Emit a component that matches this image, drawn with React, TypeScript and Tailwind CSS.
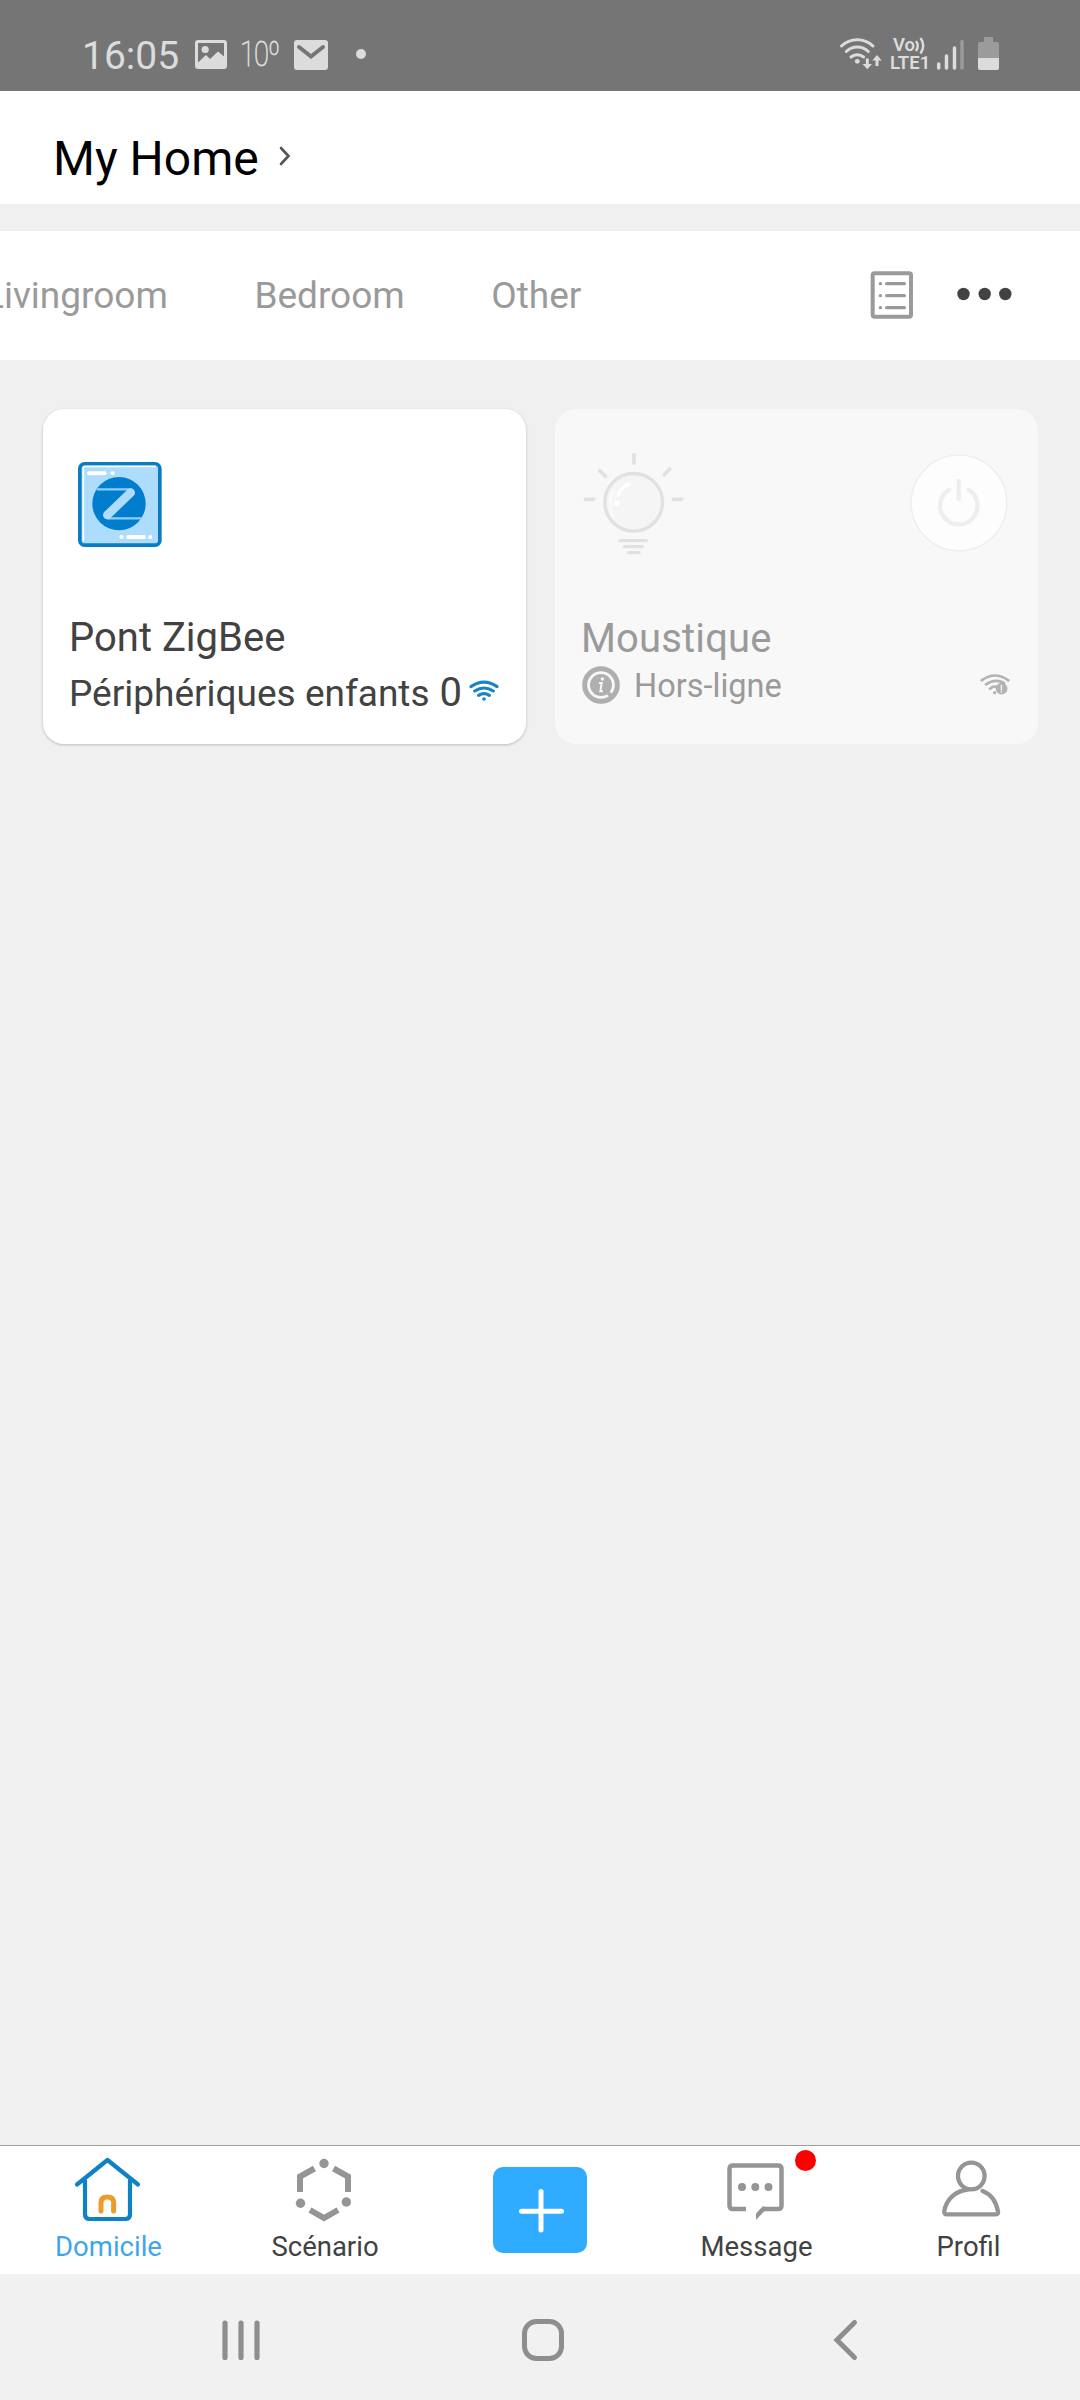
import React from "react"

const ROOMS = ["Livingroom", "Bedroom", "Other"]

function StatusBar() {
  return (
    <div className="h-[91px] bg-[#757575] text-[#dcdcdc] flex items-start pl-[82px] pr-[81px] shrink-0">
      <div className="text-[39px] leading-[48px] mt-8 w-[113px]">16:05</div>

      {/* picture */}
      <svg className="mt-10" width="32" height="29" viewBox="0 0 32 29">
        <path
          fillRule="evenodd"
          fill="currentColor"
          d="M3 0h26a3 3 0 0 1 3 3v23a3 3 0 0 1-3 3H3a3 3 0 0 1-3-3V3a3 3 0 0 1 3-3zM3 3v19.500l8-7.500 4 4 8-7.500 6 5V3z"
        />
        <circle cx="10.200" cy="9.500" r="3.600" fill="currentColor" />
      </svg>

      <div className="text-[35px] leading-[42px] mt-[34px] ml-[13px] w-[54px] font-thin tracking-[-1.200px] origin-left scale-x-[0.780] [-webkit-text-stroke:0.800px_#dcdcdc]">
        10º
      </div>

      {/* mail */}
      <svg className="mt-10" width="34" height="30" viewBox="0 0 34 30">
        <rect width="34" height="30" rx="3" fill="currentColor" />
        <path d="M5 7l12 9.500L29 7" fill="none" stroke="#757575" strokeWidth="4" strokeLinecap="round" />
      </svg>
      <div className="w-[10px] h-[10px] rounded-full bg-[#dcdcdc] mt-[49px] ml-[28px]" />

      <div className="flex-1" />

      {/* wifi with traffic arrows */}
      <svg className="mt-9" width="44" height="35" viewBox="838 36 44 35" fill="none" stroke="currentColor">
        <g strokeWidth="3" strokeLinecap="round">
          <path d="M841.500 46a23 23 0 0 1 31.500 0" />
          <path d="M846.300 51.500a16 16 0 0 1 22 0" />
          <path d="M851 57a9.600 9.600 0 0 1 12.600 0" />
        </g>
        <circle cx="857.300" cy="61.300" r="2.400" fill="currentColor" stroke="none" />
        <path strokeWidth="3" d="M867.300 58.500v8M877 66v-8" />
        <path d="M862.600 64h9.400l-4.700 5.200zM872.300 60.500h9.400l-4.700-5.500z" fill="currentColor" stroke="none" />
      </svg>

      <div className="w-[40px] ml-2 mt-9 font-semibold">
        <div className="flex h-[17px] pl-[3px]">
          <span className="text-[18.500px] leading-[18px]">Vo</span>
          <svg className="ml-[-1px] mt-px shrink-0" width="12" height="18" viewBox="0 0 12 18" fill="none" stroke="currentColor" strokeWidth="2.400">
            <path d="M2 4q3.500 4.500 0 10M6.500 1q5.500 7.500 0 15.500" />
          </svg>
        </div>
        <div className="text-[18.500px] leading-[20px]">LTE1</div>
      </div>

      {/* signal */}
      <svg className="mt-9 ml-[6px]" width="28" height="35" viewBox="936 36 28 35" stroke="currentColor" strokeWidth="3.500" strokeLinecap="round">
        <path d="M938.700 64v4M946.500 56v12M954.500 48v20" />
        <path d="M962 41.500V68" stroke="#9b9b9b" />
      </svg>

      {/* battery */}
      <svg className="mt-9 ml-[14px]" width="21" height="35" viewBox="0 0 21 35">
        <path d="M6 1h9v5h4a2 2 0 0 1 2 2v14H0V8a2 2 0 0 1 2-2h4z" fill="#9b9b9b" />
        <path d="M0 22h21v10a2 2 0 0 1-2 2H2a2 2 0 0 1-2-2z" fill="currentColor" />
      </svg>
    </div>
  )
}

function HomeHeader() {
  return (
    <div className="h-[113px] bg-white flex items-center pl-[53px] pt-[22px] shrink-0">
      <h1 className="text-[48px] leading-[56px] text-black">My Home</h1>
      <svg className="ml-[19px] mb-[5px]" width="14" height="20" viewBox="0 0 14 20" fill="none" stroke="#555" strokeWidth="2.600">
        <path d="M3 2l7.500 8L3 18" strokeLinecap="round" />
      </svg>
    </div>
  )
}

function RoomTabs() {
  return (
    <div className="h-[129px] mt-[27px] bg-white flex items-center overflow-hidden shrink-0">
      <div className="flex gap-[86.500px] ml-[-16px] text-[37px] leading-[44px] text-[#9a9a9a]">
        {ROOMS.map((room) => (
          <span key={room}>{room}</span>
        ))}
      </div>
      <div className="flex-1" />
      <svg className="mb-[2px]" width="44" height="50" viewBox="150 150 132 150" fill="none" stroke="#9a9a9a" strokeWidth="12">
        <rect x="158" y="160" width="115" height="130" rx="6" />
        <path strokeWidth="10" strokeLinecap="round" d="M200 191h53M200 227h53M200 263h53" />
        <path strokeWidth="10" strokeLinecap="round" d="M181 191h.5M181 227h.5M181 263h.5" />
      </svg>
      <svg className="ml-[43px] mr-[68px] mb-[3px]" width="55" height="14" viewBox="957 287 55 14" fill="#424242">
        <circle cx="963.500" cy="294" r="6.200" />
        <circle cx="984.700" cy="294" r="6.200" />
        <circle cx="1005.300" cy="294" r="6.200" />
      </svg>
    </div>
  )
}

function BridgeCard() {
  return (
    <div className="w-[483px] h-[335px] rounded-[21px] bg-white shadow-[0_1px_3px_rgba(0,0,0,0.22)] pt-[53px] pl-[26px] text-[#424242]">
      <svg className="ml-[9px]" width="84" height="85" viewBox="144 202 252 255">
        <rect x="149.500" y="207.500" width="240" height="244" rx="14" fill="#aedcfd" stroke="#0a7dc2" strokeWidth="11" />
        <path d="M160 438V219q0-4 5-4h213" fill="none" stroke="#fff" strokeWidth="5" />
        <circle cx="267" cy="327" r="80" fill="#007dcc" />
        <path d="M200 284h102M232 371h103" fill="none" stroke="#8fd0fb" strokeWidth="7" />
        <path d="M302 294L232 361" stroke="#aedcfd" strokeWidth="26" strokeLinecap="round" />
        <path d="M177 236h47M247 236h1M274 427h1M294 427h48M360 427h1" fill="none" stroke="#fff" strokeWidth="12" strokeLinecap="round" />
      </svg>
      <div className="text-[40px] leading-[48px] mt-[67px]">Pont ZigBee</div>
      <div className="flex items-baseline mt-[7px]">
        <span className="text-[37px] leading-[48px]">Périphériques enfants</span>
        <span className="text-[40px] leading-[48px] ml-[10px]">0</span>
        <svg className="ml-[7px] mb-[6px] self-center" width="30" height="21" viewBox="1317 853 90 63" fill="none" stroke="#1784c8" strokeWidth="9.500" strokeLinecap="round">
          <path d="M1323 873q39-27 78 0M1334 886q28-18 56 0M1346 899q16-10 32 0" />
          <circle cx="1362" cy="910" r="5.500" fill="#1784c8" stroke="none" />
        </svg>
      </div>
    </div>
  )
}

function OfflineCard() {
  return (
    <div className="w-[483px] h-[335px] rounded-[21px] bg-[#f8f8f8] pt-[43px] pl-[26px] pr-[28px] text-[#9a9a9a]">
      <div className="flex justify-between items-start">
        <svg className="ml-[1px]" width="104" height="104" viewBox="111 171 312 312" fill="none" stroke="#e1e1e1" strokeWidth="10" strokeLinecap="round">
          <circle cx="266" cy="322" r="86.500" fill="#f5f5f5" />
          <path d="M204 366q-17-41 1-78" stroke="#fafafa" strokeWidth="9" />
          <path d="M219 301q8-24 31-33" stroke="#fff" />
          <circle cx="215" cy="325" r="9" fill="#fff" stroke="none" />
          <path d="M267 179v26M164 227l18 17M374 222l-16 17M121 313h25M385 313h25" strokeWidth="11" />
          <path d="M225 437h79M238 455h54M250 473h32" />
        </svg>
        <svg className="mr-[2px] mt-[2px]" width="98" height="98" viewBox="1096 178 294 294" fill="none" stroke="#eeeeee" strokeLinecap="round">
          <circle cx="1243" cy="325" r="143.500" fill="#fdfdfd" strokeWidth="4" />
          <path d="M1242 259v54M1214 285a56 56 0 1 0 57 0" strokeWidth="13" />
        </svg>
      </div>

      <div className="text-[40px] leading-[48px] mt-[59px] tracking-[0.150px]">Moustique</div>

      <div className="flex items-center mt-px">
        <svg width="40" height="40" viewBox="108 810 120 120">
          <circle cx="168" cy="870" r="49" fill="none" stroke="#afafaf" strokeWidth="15" />
          <circle cx="168" cy="870" r="33" fill="#afafaf" />
          <path d="M190 894l8 8" stroke="#afafaf" strokeWidth="12" />
          <circle cx="172" cy="852" r="5" fill="#f8f8f8" />
          <path d="M162 864h8l-4 25h8" fill="none" stroke="#f8f8f8" strokeWidth="6" />
        </svg>
        <span className="text-[32.500px] leading-[40px] ml-[13px] mt-[2px]">Hors-ligne</span>
        <svg className="ml-auto mb-[2px]" width="30" height="22" viewBox="1304 835 90 66" fill="none" stroke="#b3b3b3" strokeWidth="8" strokeLinecap="round">
          <path d="M1309 857q40-29 80 0M1322 869q27-19 54-4M1334 882q10-8 18-6" />
          <circle cx="1369" cy="882" r="17.500" fill="#b3b3b3" stroke="none" />
          <path d="M1368 872v14M1368 892v1" stroke="#f8f8f8" strokeWidth="4" />
          <circle cx="1348" cy="894" r="5" fill="#b3b3b3" stroke="none" />
        </svg>
      </div>
    </div>
  )
}

function HouseIcon() {
  return (
    <svg className="mr-[2px]" width="68" height="66" viewBox="73 2157 68 66" fill="none" stroke="#0f82c4" strokeWidth="4.200" strokeLinejoin="round" strokeLinecap="round">
      <path d="M77 2184.500l30.500-24.500 30.500 24.500" />
      <path d="M85 2180.500v34q0 4.500 4.500 4.500h36q4.500 0 4.500-4.500v-34" />
      <path d="M101 2211v-8.500q0-5.500 6.300-5.500t6.300 5.500v8.500" stroke="#ee9b2b" strokeWidth="5" />
    </svg>
  )
}

function SceneIcon() {
  return (
    <svg width="58" height="66" viewBox="295 2157 58 66" fill="none" stroke="#959595" strokeWidth="6">
      <path d="M314.500 2168.500l-14.500 8v15.500M333.500 2168.500l14.500 8v15.500M310 2210l14 8 14-8" />
      <g fill="#959595" stroke="none">
        <circle cx="324" cy="2163.500" r="4.700" />
        <circle cx="300.500" cy="2203.300" r="4.700" />
        <circle cx="346.300" cy="2202" r="4.700" />
      </g>
    </svg>
  )
}

function MessageIcon() {
  return (
    <svg className="mr-[2px]" width="58" height="66" viewBox="726 2157 58 66" fill="none" stroke="#959595" strokeWidth="4.500">
      <path d="M746 2209h-13q-3.500 0-3.500-3.500v-36.500q0-3.500 3.500-3.500h45q3.500 0 3.500 3.500v36.500q0 3.500-3.500 3.500h-14.500" />
      <path d="M756 2213.500v6.500l9-9.500v-4h-2.500z" fill="#959595" stroke="none" />
      <g fill="#959595" stroke="none">
        <circle cx="742" cy="2187" r="4" />
        <circle cx="755.300" cy="2187" r="4" />
        <circle cx="768.500" cy="2187" r="4" />
      </g>
    </svg>
  )
}

function ProfileIcon() {
  return (
    <svg className="mr-[2px]" width="60" height="66" viewBox="941 2157 60 66" fill="none" stroke="#959595" strokeWidth="4.300" strokeLinecap="round">
      <circle cx="971.300" cy="2176" r="13.300" />
      <path d="M968 2189.500c-13 1.500-22 10-23.800 22q-.2 2.900 2.800 2.900h49q2.500 0 2-3c-2-10.500-7.500-17.500-15.500-20.400" strokeLinejoin="round" />
    </svg>
  )
}

function TabBar() {
  return (
    <div className="h-[129px] bg-white border-t border-[#9f9f9f] grid grid-cols-5 text-[27.500px] leading-[32px] text-[#424242] shrink-0">
      <div className="flex flex-col items-center pt-[11px]">
        <HouseIcon />
        <span className="text-[#3fa6ec] mt-2 ml-px">Domicile</span>
      </div>
      <div className="flex flex-col items-center pt-[11px]">
        <SceneIcon />
        <span className="mt-2 ml-[2px]">Scénario</span>
      </div>
      <div className="flex flex-col items-center pt-[21px]">
        <svg className="rounded-[10px] bg-[#2fabff]" width="94" height="86" viewBox="0 0 94 86" stroke="#fff" strokeWidth="5" strokeLinecap="round">
          <path d="M28.500 44.300h40M48 24.500v38.500" />
        </svg>
      </div>
      <div className="relative flex flex-col items-center pt-[11px]">
        <MessageIcon />
        <span className="mt-2 ml-px">Message</span>
        <div className="absolute left-[147px] top-[4px] w-[21px] h-[21px] rounded-full bg-[#ff0000]" />
      </div>
      <div className="flex flex-col items-center pt-[11px]">
        <ProfileIcon />
        <span className="mt-2 mr-[7px]">Profil</span>
      </div>
    </div>
  )
}

function SystemNav() {
  return (
    <div className="h-[126px] bg-[#f1f1f1] flex items-center px-[219px] pt-[6px] shrink-0">
      <svg width="44" height="44" viewBox="219 2318 44 44" stroke="#8e8e8e" strokeWidth="5.200" strokeLinecap="round">
        <path d="M225 2323v34.500M241 2323v34.500M257 2323v34.500" />
      </svg>
      <svg className="ml-[258px]" width="44" height="44" viewBox="521 2318 44 44" fill="none" stroke="#8e8e8e" strokeWidth="5">
        <rect x="524.500" y="2321.500" width="37" height="37" rx="12" />
      </svg>
      <svg className="ml-auto" width="30" height="44" viewBox="831 2318 30 44" fill="none" stroke="#8e8e8e" strokeWidth="5" strokeLinecap="round">
        <path d="M854.500 2322.500l-17.500 17.500 17.500 17.500" />
      </svg>
    </div>
  )
}

export default function App() {
  return (
    <div className="w-[1080px] h-[2400px] bg-[#f0f0f0] flex flex-col overflow-hidden font-['Roboto',sans-serif]">
      <StatusBar />
      <HomeHeader />
      <RoomTabs />
      <div className="flex-1 flex items-start gap-[29px] pl-[43px] pt-[49px]">
        <BridgeCard />
        <OfflineCard />
      </div>
      <TabBar />
      <SystemNav />
    </div>
  )
}
